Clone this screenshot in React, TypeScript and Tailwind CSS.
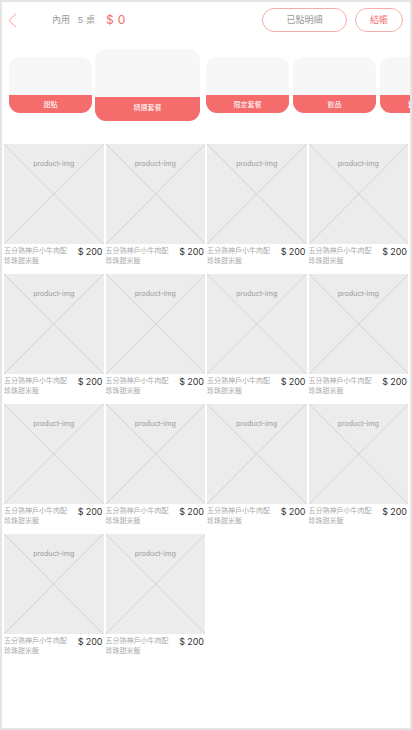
import React from "react";

type Category = { name: string; active?: boolean };

const categories: Category[] = [
  { name: "甜點" },
  { name: "精選套餐", active: true },
  { name: "限定套餐" },
  { name: "飲品" },
  { name: "套餐加購" },
];

const products = Array.from({ length: 14 }, (_, id) => ({
  id,
  name: "五分熟神戶小牛肉配珍珠甜米飯",
  price: 200,
}));

function CategoryCard({ name, active }: Category) {
  return (
    <button
      type="button"
      className={
        active
          ? "-ml-px mr-[2px] flex h-[72px] w-[105px] shrink-0 flex-col overflow-hidden rounded-[11px] bg-[#f7f7f7]"
          : "flex h-14 w-[83px] shrink-0 flex-col overflow-hidden rounded-[11px] bg-[#f7f7f7]"
      }
    >
      <span className="w-full flex-1" />
      <span
        className={
          active
            ? "flex h-6 w-full items-center justify-center bg-[#f46c6c] pb-1 text-[7px] leading-none text-white"
            : "flex h-[18px] w-full items-center justify-center bg-[#f46c6c] text-[7px] leading-none text-white"
        }
      >
        {name}
      </span>
    </button>
  );
}

function ProductCard({ name, price }: { name: string; price: number }) {
  return (
    <li>
      <div className="grid h-[100px] bg-[#ececec]">
        <svg
          className="col-start-1 row-start-1 h-[100px] w-full"
          viewBox="0 0 100 100"
          preserveAspectRatio="none"
          fill="none"
          stroke="#cbcbcb"
          strokeWidth="0.8"
          aria-hidden="true"
        >
          <path d="M0 0L100 100M100 0L0 100" />
        </svg>
        <span className="col-start-1 row-start-1 pt-[15px] text-center font-[Inter,sans-serif] text-[7px] leading-[10px] text-[#999]">
          product-img
        </span>
      </div>
      <div className="flex h-[30px] items-start justify-between pt-[2px]">
        <p className="w-[64px] text-[7px] leading-[10px] text-[#aaa]">{name}</p>
        <span className="flex gap-[2px] pr-px pt-px font-[Inter,sans-serif] text-[9px] leading-[10px] text-[#333]">
          <span>$</span>
          <span>{price}</span>
        </span>
      </div>
    </li>
  );
}

export default function App() {
  return (
    <div className="flex min-h-screen flex-col border-2 border-[#e5e5e5] bg-white font-['Liberation_Sans','Noto_Sans_CJK_TC',sans-serif]">
      <header className="flex h-9 items-center pl-[6px] pr-[7px]">
        <button type="button" aria-label="返回" className="w-[9px]">
          <svg viewBox="0 0 9 15" className="h-[15px] w-[9px]" fill="none" stroke="#f46c6c" strokeWidth="0.7">
            <path d="M8 .8L1 7.5L8 14.2" />
          </svg>
        </button>
        <p className="ml-[35px] flex items-center gap-2 text-[9px] leading-[12px] text-[#999]">
          <span>內用</span>
          <span className="flex gap-[3px]">
            <span>5</span>
            <span>桌</span>
          </span>
        </p>
        <p className="ml-[11px] flex gap-1 font-[Inter,sans-serif] text-[12px] leading-[14px] text-[#f46c6c]">
          <span>$</span>
          <span>0</span>
        </p>
        <button
          type="button"
          className="ml-auto h-6 w-[85px] rounded-full border border-[#f8abab] text-[9px] leading-none text-[#999]"
        >
          已點明細
        </button>
        <button
          type="button"
          className="ml-2 h-6 w-12 rounded-full border border-[#f8abab] text-[9px] leading-none text-[#f46c6c]"
        >
          結帳
        </button>
      </header>

      <nav className="mt-[11px] flex h-[72px] items-center gap-1 overflow-hidden pl-[7px]">
        {categories.map((category) => (
          <CategoryCard key={category.name} {...category} />
        ))}
      </nav>

      <main className="mt-[23px] px-[2px]">
        <ul className="grid grid-cols-4 gap-x-[2px]">
          {products.map((product) => (
            <ProductCard key={product.id} name={product.name} price={product.price} />
          ))}
        </ul>
      </main>
    </div>
  );
}
